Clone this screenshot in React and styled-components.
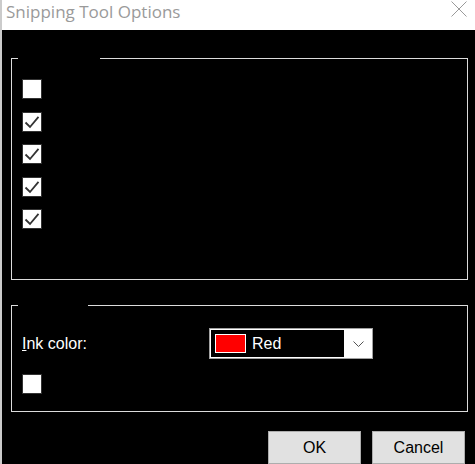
import styled, { createGlobalStyle } from 'styled-components';

const GlobalStyle = createGlobalStyle`
    html, body {
        margin: 0;
        padding: 0;
        background: #000;
        overflow: hidden;
    }
    * {
        box-sizing: border-box;
    }
    body {
        font-family: "Liberation Sans", Arial, sans-serif;
    }
`;

const Checkbox = ({ checked }) => (
    <Box>
        {checked && (
            <svg width="18" height="18" viewBox="0 0 18 18">
                <polyline points="2.5,9.5 7,14 15.5,3.8" fill="none" stroke="#333" strokeWidth="1.8" />
            </svg>
        )}
    </Box>
);

const App = () => {
    const options = [false, true, true, true, true];

    return (
        <Window>
            <GlobalStyle />
            <TitleBar>
                <Title>Snipping Tool Options</Title>
                <CloseIcon width="16" height="16" viewBox="0 0 16 16">
                    <path d="M0.5 0.5 L15.5 15.5 M15.5 0.5 L0.5 15.5" stroke="#9a9a9a" strokeWidth="1" fill="none" />
                </CloseIcon>
            </TitleBar>
            <Content>
                <Group>
                    <Legend $width={82} />
                    <OptionList>
                        {options.map((checked, index) => (
                            <Checkbox key={index} checked={checked} />
                        ))}
                    </OptionList>
                </Group>
                <Group $spaced>
                    <Legend $width={70} />
                    <InkBody>
                        <InkRow>
                            <Label><u>I</u>nk color:</Label>
                            <Combo>
                                <Selected>
                                    <Swatch $color="#ff0000" />
                                    <ComboText>Red</ComboText>
                                </Selected>
                                <Arrow>
                                    <svg width="11" height="6" viewBox="0 0 11 6">
                                        <path d="M0.5 0.5 L5.5 5.5 L10.5 0.5" stroke="#555" strokeWidth="1" fill="none" />
                                    </svg>
                                </Arrow>
                            </Combo>
                        </InkRow>
                        <Checkbox checked={false} />
                    </InkBody>
                </Group>
                <Buttons>
                    <Button>OK</Button>
                    <Button>Cancel</Button>
                </Buttons>
            </Content>
        </Window>
    );
};

export default App;

const Window = styled.div`
    display: flex;
    flex-direction: column;
    height: 464px;
    border-left: 2px solid #cbcbcb;
`;

const TitleBar = styled.div`
    display: flex;
    justify-content: space-between;
    align-items: flex-start;
    height: 31px;
    padding: 0 8px 0 4px;
    background: #fff;
`;

const Title = styled.div`
    font-family: "Open Sans", sans-serif;
    font-size: 17px;
    line-height: 23.5px;
    color: #9a9a9a;
`;

const CloseIcon = styled.svg`
    margin-top: 1px;
`;

const Content = styled.div`
    flex: 1;
    padding: 28px 7px 0 9px;
    background: #000;
`;

const Group = styled.fieldset`
    margin: ${({ $spaced }) => ($spaced ? '25px' : '0')} 0 0 0;
    padding: 0;
    min-width: 0;
    border: 1px solid #dcdcdc;
`;

const Legend = styled.legend`
    width: ${({ $width }) => $width}px;
    height: 0;
    margin-left: 6px;
    padding: 0;
`;

const OptionList = styled.div`
    display: flex;
    flex-direction: column;
    gap: 12.5px;
    height: 220px;
    padding: 20px 0 0 10px;
`;

const Box = styled.div`
    display: flex;
    align-items: center;
    justify-content: center;
    width: 20px;
    height: 20px;
    border: 1px solid #333;
    background: #fff;
`;

const InkBody = styled.div`
    display: flex;
    flex-direction: column;
    gap: 15px;
    padding: 22px 0 17px 10px;
`;

const InkRow = styled.div`
    display: grid;
    grid-template-columns: 187px 164px;
    align-items: center;
`;

const Label = styled.span`
    font-size: 16px;
    color: #fff;
`;

const Combo = styled.div`
    display: flex;
    height: 31px;
    padding: 1px;
    border: 1px solid #a0a0a0;
    background: #fff;
`;

const Selected = styled.div`
    display: flex;
    align-items: center;
    flex: 1;
    padding-left: 4px;
    background: #000;
`;

const Swatch = styled.div`
    width: 31px;
    height: 19px;
    border: 1px solid #fff;
    background: ${({ $color }) => $color};
`;

const ComboText = styled.span`
    margin-left: 6px;
    font-size: 16px;
    color: #fff;
`;

const Arrow = styled.div`
    display: flex;
    align-items: center;
    justify-content: center;
    width: 27px;
    padding-left: 2px;
`;

const Buttons = styled.div`
    display: flex;
    justify-content: flex-end;
    gap: 11px;
    margin-top: 19px;
    padding-right: 3px;
`;

const Button = styled.button.attrs(() => ({ type: 'button' }))`
    width: 93px;
    height: 33px;
    padding: 0;
    border: 1px solid #adadad;
    background: #e1e1e1;
    font-family: "Liberation Sans", Arial, sans-serif;
    font-size: 16px;
    color: #000;
`;
